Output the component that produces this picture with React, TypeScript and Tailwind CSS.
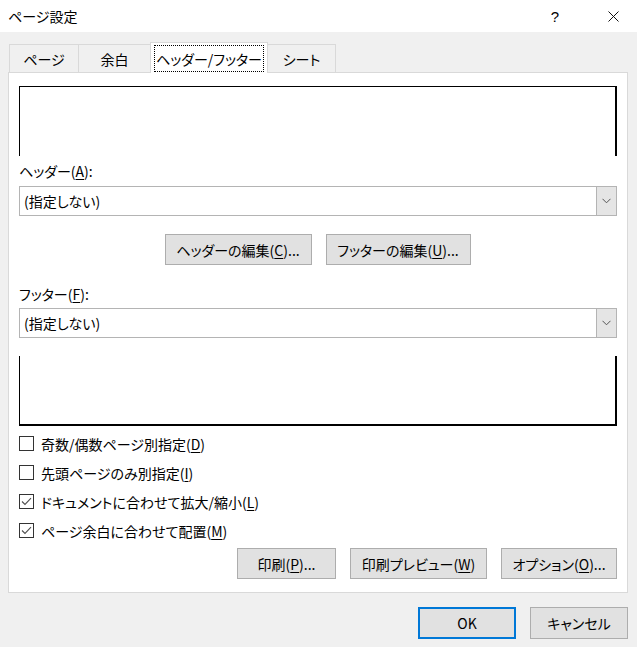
import React from "react";

const U = ({ c }: { c: string }) => <span className="underline underline-offset-2 decoration-1">{c}</span>;

function Btn({ children, className = "" }: { children: React.ReactNode; className?: string }) {
  return (
    <div
      className={
        "h-[31px] flex items-center justify-center bg-[#e1e1e1] border border-[#adadad] text-black " + className
      }
    >
      {children}
    </div>
  );
}

function Select() {
  return (
    <div className="h-[30px] flex border border-[#b4b4b4] bg-white">
      <div className="flex-1 flex items-center pl-[4px]">(指定しない)</div>
      <div className="w-[21px] -my-[1px] -mr-[1px] border border-[#b4b4b4] bg-[#e5e5e5] flex items-center justify-center">
        <svg width="9" height="6" viewBox="0 0 9 6">
          <path d="M0.5 0.8 L4.5 4.8 L8.5 0.8" fill="none" stroke="#555" strokeWidth="1" />
        </svg>
      </div>
    </div>
  );
}

function Check({ checked, children }: { checked?: boolean; children: React.ReactNode }) {
  return (
    <div className="h-[29px] flex items-center">
      <div className="w-[15px] h-[15px] border border-[#333] bg-white flex items-center justify-center">
        {checked && (
          <svg width="13" height="13" viewBox="0 0 13 13">
            <path d="M2 6.5 L5 9.5 L11 3.2" fill="none" stroke="#505050" strokeWidth="1.1" />
          </svg>
        )}
      </div>
      <div className="ml-[7px]">{children}</div>
    </div>
  );
}

export default function App() {
  return (
    <div
      className="w-[637px] h-[647px] bg-[#f0f0f0] text-[14px] leading-none text-black [font-feature-settings:'palt'] overflow-hidden"
      style={{ fontFamily: '"Noto Sans CJK JP", "Noto Sans", sans-serif' }}
    >
      {/* Title bar */}
      <div className="h-[32px] bg-white flex items-center pl-[8px]">
        <div className="text-[14px] flex-1">ページ設定</div>
        <div className="w-[46px] text-center text-[15px] mr-[12px]" style={{ fontFamily: '"Liberation Sans", sans-serif' }}>?</div>
        <div className="w-[46px] h-[32px] flex items-center justify-center mr-[1px]">
          <svg width="11" height="11" viewBox="0 0 11 11">
            <path d="M0.5 0.5 L10.5 10.5 M10.5 0.5 L0.5 10.5" stroke="#111" strokeWidth="1" />
          </svg>
        </div>
      </div>

      <div className="pl-[8px] pr-[9px] pt-[10px]">
        {/* Tabs */}
        <div className="flex items-end h-[31px] pl-[1px] relative z-10 -mb-[1px]">
          <div className="h-[28px] w-[69px] border-l border-t border-[#d9d9d9] flex items-center justify-center mb-[1px]">ページ</div>
          <div className="h-[28px] w-[72px] border-l border-t border-[#d9d9d9] flex items-center justify-center mb-[1px]">余白</div>
          <div className="h-[31px] w-[118px] border-l border-t border-r border-[#d9d9d9] bg-white flex items-center justify-center px-[3px] pt-[2px] pb-[1px]">
            <div className="w-full h-full border border-dotted border-black flex items-center justify-center">ヘッダー/フッター</div>
          </div>
          <div className="h-[28px] w-[68px] border-t border-r border-[#d9d9d9] flex items-center justify-center mb-[1px]">シート</div>
        </div>

        {/* Panel */}
        <div className="h-[521px] bg-white border border-[#d9d9d9] px-[10px] pt-[13px] flex flex-col">
          <div className="h-[70px] border-t border-l border-r-2 border-black" />
          <div className="mt-[8px] h-[14px] flex items-center">
            ヘッダー(<U c="A" />):
          </div>
          <div className="mt-[8px]">
            <Select />
          </div>
          <div className="mt-[18px] flex justify-center gap-[14px] pr-[1px]">
            <Btn className="w-[147px]">ヘッダーの編集(<U c="C" />)...</Btn>
            <Btn className="w-[145px]">フッターの編集(<U c="U" />)...</Btn>
          </div>
          <div className="mt-[22px] h-[14px] flex items-center">
            フッター(<U c="F" />):
          </div>
          <div className="mt-[7px]">
            <Select />
          </div>
          <div className="mt-[18px] h-[70px] border-l border-r-2 border-b-2 border-black" />
          <div className="mt-[3px] flex flex-col">
            <Check>奇数/偶数ページ別指定(<U c="D" />)</Check>
            <Check>先頭ページのみ別指定(<U c="I" />)</Check>
            <Check checked>ドキュメントに合わせて拡大/縮小(<U c="L" />)</Check>
            <Check checked>ページ余白に合わせて配置(<U c="M" />)</Check>
          </div>
          <div className="mt-[3px] flex justify-end gap-[14px]">
            <Btn className="w-[99px]">印刷(<U c="P" />)...</Btn>
            <Btn className="w-[137px]">印刷プレビュー(<U c="W" />)</Btn>
            <Btn className="w-[116px]">オプション(<U c="O" />)...</Btn>
          </div>
        </div>

        {/* Footer buttons */}
        <div className="mt-[14px] flex justify-end gap-[14px]">
          <div className="w-[98px] h-[32px] flex items-center justify-center bg-[#e1e1e1] border-2 border-[#0078d7]">OK</div>
          <div className="w-[98px] h-[32px] flex items-center justify-center bg-[#e1e1e1] border border-[#adadad]">キャンセル</div>
        </div>
      </div>
    </div>
  );
}
